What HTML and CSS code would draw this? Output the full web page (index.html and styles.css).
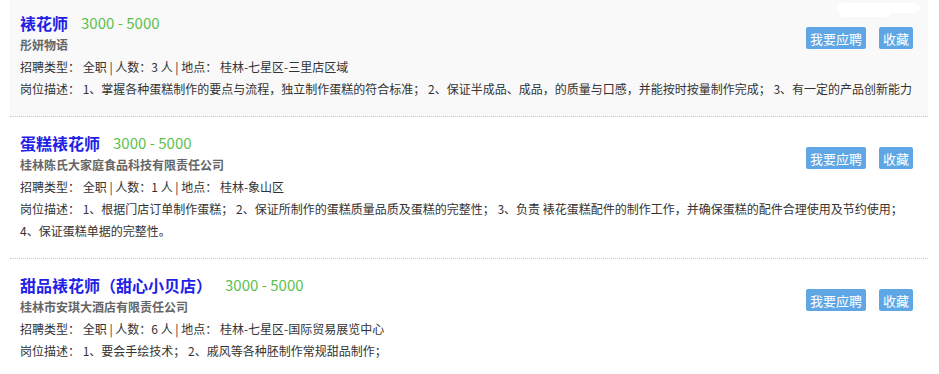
FILE: index.html
```html
<!DOCTYPE html>
<html>
  <head>
    <meta charset="utf-8">
    <link rel="stylesheet" href="styles.css">
  </head>
  <body>
    <div class="job-list">
      <div class="job-item current">
        <div class="job-actions">
          <button class="btn">我要应聘</button>
          <button class="btn">收藏</button>
        </div>
        <div class="job-title"><a href="#">裱花师</a><span class="salary">3000 - 5000</span></div>
        <div class="company">彤妍物语</div>
        <div class="job-meta">招聘类型： 全职 | 人数：3 人 | 地点： 桂林-七星区-三里店区域</div>
        <div class="job-desc">岗位描述： 1、掌握各种蛋糕制作的要点与流程，独立制作蛋糕的符合标准； 2、保证半成品、成品，的质量与口感，并能按时按量制作完成； 3、有一定的产品创新能力</div>
        <span class="smudge"></span>
        <span class="smudge low"></span>
      </div>
      <div class="job-item">
        <div class="job-actions">
          <button class="btn">我要应聘</button>
          <button class="btn">收藏</button>
        </div>
        <div class="job-title"><a href="#">蛋糕裱花师</a><span class="salary">3000 - 5000</span></div>
        <div class="company">桂林陈氏大家庭食品科技有限责任公司</div>
        <div class="job-meta">招聘类型： 全职 | 人数：1 人 | 地点： 桂林-象山区</div>
        <div class="job-desc">岗位描述： 1、根据门店订单制作蛋糕； 2、保证所制作的蛋糕质量品质及蛋糕的完整性； 3、负责 裱花蛋糕配件的制作工作，并确保蛋糕的配件合理使用及节约使用； 4、保证蛋糕单据的完整性。</div>
      </div>
      <div class="job-item">
        <div class="job-actions">
          <button class="btn">我要应聘</button>
          <button class="btn">收藏</button>
        </div>
        <div class="job-title"><a href="#">甜品裱花师（甜心小贝店）</a><span class="salary">3000 - 5000</span></div>
        <div class="company">桂林市安琪大酒店有限责任公司</div>
        <div class="job-meta">招聘类型： 全职 | 人数：6 人 | 地点： 桂林-七星区-国际贸易展览中心</div>
        <div class="job-desc">岗位描述： 1、要会手绘技术； 2、戚风等各种胚制作常规甜品制作；</div>
      </div>
    </div>
  </body>
</html>
```

FILE: styles.css
```css
body {
  margin: 0;
  background: #fff;
  font: 12px "Noto Sans CJK SC", "Liberation Sans", sans-serif;
  color: #333;
}

.job-list {
  margin: -3px 11px 0 10px;
}

.job-item {
  position: relative;
  padding: 15px 15px 16px 10px;
  line-height: 22px;
  border-bottom: 1px dotted #c8c8c8;
}

.job-item.current {
  background: #f9f9f9;
}

.job-actions {
  float: right;
  display: flex;
  gap: 13px;
  margin-top: 15px;
}

.btn {
  height: 22px;
  line-height: 22px;
  padding: 0 4px;
  border: none;
  border-radius: 2px;
  background: #5fa7e4;
  color: #fff;
  font: 13px "Noto Sans CJK SC", sans-serif;
}

.job-title {
  display: flex;
  align-items: center;
  height: 22px;
}

.job-title a {
  font-size: 16px;
  font-weight: bold;
  color: #1e22e6;
  text-decoration: none;
}

.salary {
  margin-left: 13px;
  font-size: 15px;
  color: #5cbf4c;
}

.company {
  color: #666;
  font-weight: bold;
}

/* white blot over the top right corner */
.smudge {
  position: absolute;
  top: 6px;
  left: 827px;
  width: 83px;
  height: 10px;
  background: #fff;
  border-radius: 6px;
}

.smudge.low {
  top: 12px;
  left: 830px;
  width: 50px;
  height: 8px;
}
```
